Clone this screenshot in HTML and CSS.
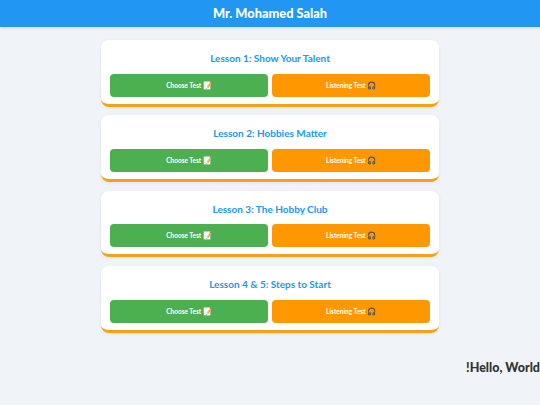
FILE: index.html
```html
<!DOCTYPE html>
<html lang="en">
<head>
<meta charset="utf-8">
<title>Mr. Mohamed Salah</title>
<link rel="stylesheet" href="styles.css">
</head>
<body>
<header class="topbar">Mr. Mohamed Salah</header>
<main class="lessons">
  <section class="card">
    <h2 class="card-title">Lesson 1: Show Your Talent</h2>
    <div class="actions"><a class="btn btn-green">Choose Test <span class="emoji">📝</span></a><a class="btn btn-orange">Listening Test <span class="emoji">🎧</span></a></div>
  </section>
  <section class="card">
    <h2 class="card-title">Lesson 2: Hobbies Matter</h2>
    <div class="actions"><a class="btn btn-green">Choose Test <span class="emoji">📝</span></a><a class="btn btn-orange">Listening Test <span class="emoji">🎧</span></a></div>
  </section>
  <section class="card">
    <h2 class="card-title">Lesson 3: The Hobby Club</h2>
    <div class="actions"><a class="btn btn-green">Choose Test <span class="emoji">📝</span></a><a class="btn btn-orange">Listening Test <span class="emoji">🎧</span></a></div>
  </section>
  <section class="card">
    <h2 class="card-title">Lesson 4 &amp; 5: Steps to Start</h2>
    <div class="actions"><a class="btn btn-green">Choose Test <span class="emoji">📝</span></a><a class="btn btn-orange">Listening Test <span class="emoji">🎧</span></a></div>
  </section>
</main>
<p class="hello" dir="rtl">Hello, World!</p>
</body>
</html>
```
FILE: styles.css
```css
* { box-sizing: border-box; }
html, body { margin: 0; padding: 0; }
body {
  height: 405px;
  overflow: hidden;
  background: #f0f4f8;
  font-family: "Lato", "Noto Sans", sans-serif;
}
.topbar {
  height: 27px;
  background: #2196f3;
  color: #fff;
  font-size: 12.8px;
  font-weight: 900;
  line-height: 27px;
  text-align: center;
  box-shadow: 0 1px 3px rgba(0, 0, 0, 0.12);
}
.lessons {
  width: 338px;
  margin: 13px auto 0;
  display: flex;
  flex-direction: column;
  gap: 8.7px;
}
.card {
  height: 66.7px;
  padding: 0 9px;
  background: #fff;
  border-radius: 8px;
  border-bottom: 3px solid #f5a11c;
  box-shadow: 0 1px 4px rgba(0, 0, 0, 0.06);
}
.card-title {
  margin: 0;
  padding-top: 12px;
  height: 33.5px;
  color: #2196f3;
  font-size: 10px;
  font-weight: 700;
  line-height: 12px;
  text-align: center;
}
.actions {
  display: flex;
  gap: 4px;
}
.btn {
  flex: 1;
  height: 23px;
  border-radius: 4px;
  color: #fff;
  font-size: 6.5px;
  font-weight: 700;
  line-height: 23px;
  text-align: center;
}
.emoji { font-size: 7.5px; }
.btn-green { background: #4caf50; }
.btn-orange { background: #ff9800; }
.hello {
  margin: 27.5px 0 0;
  color: #333;
  font-size: 12.5px;
  font-weight: 900;
  line-height: 16px;
  white-space: nowrap;
}
```
